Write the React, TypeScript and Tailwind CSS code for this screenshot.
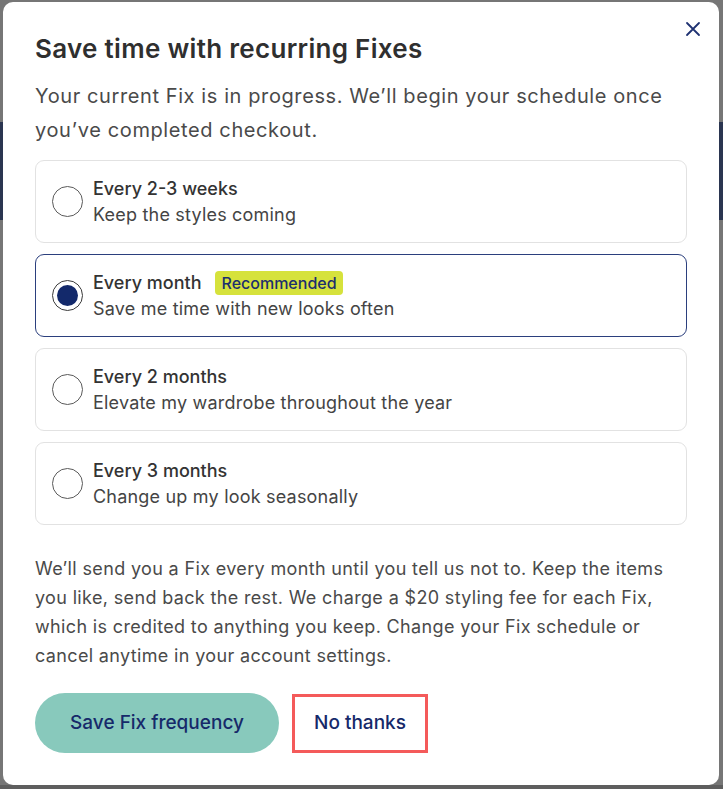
import { useState } from "react";

const options = [
  { id: "1", title: "Every 2-3 weeks", sub: "Keep the styles coming" },
  { id: "2", title: "Every month", sub: "Save me time with new looks often", badge: "Recommended" },
  { id: "3", title: "Every 2 months", sub: "Elevate my wardrobe throughout the year" },
  { id: "4", title: "Every 3 months", sub: "Change up my look seasonally" },
];

function App() {
  const [selected, setSelected] = useState("2");

  return (
    <main
      className="relative w-[723px] h-[789px] overflow-hidden bg-[#767676] pt-[2px] pl-[3px] pr-[4px]"
      style={{ fontFamily: "Inter, 'Noto Sans', sans-serif" }}
    >
      {/* dimmed page behind the modal */}
      <div className="absolute left-0 right-0 top-[122px] h-[98px] bg-[#2a3550]" />
      <div className="absolute left-0 right-0 bottom-0 h-[4px] bg-[#5e5e5e]" />

      <div className="modal relative w-[716px] h-[783px] bg-white rounded-[10px] px-[32px] pt-[30px]">
        <button className="absolute right-[17px] top-[18px] w-[18px] h-[18px] flex items-center justify-center text-[#1f3272]">
          <svg width="16" height="16" viewBox="0 0 16 16" fill="none" stroke="currentColor" strokeWidth="1.8" strokeLinecap="round">
            <path d="M2 2L14 14M14 2L2 14" />
          </svg>
        </button>

        <h1 className="text-[26px] leading-[34px] font-semibold text-[#2f2f2f] tracking-[0.3px]">
          Save time with recurring Fixes
        </h1>
        <p className="mt-[13px] w-[630px] text-[20px] leading-[34px] text-[#4a4a4a] tracking-[0.6px]">
          Your current Fix is in progress. We’ll begin your schedule once you’ve completed checkout.
        </p>

        <div className="options flex flex-col gap-[11px] mt-[13px]">
          {options.map((o) => {
            const active = o.id === selected;
            return (
              <div
                key={o.id}
                onClick={() => setSelected(o.id)}
                className={`card flex items-center h-[83px] w-[652px] rounded-[9px] border cursor-pointer pl-[16px] ${
                  active ? "border-[#2b3f7d] border-[1.5px]" : "border-[#e2e2e2]"
                }`}
              >
                <div
                  className={`w-[31px] h-[31px] rounded-full border-[1.5px] flex items-center justify-center shrink-0 ${
                    active ? "border-[#3a3a3a]" : "border-[#5a5a5a]"
                  }`}
                >
                  {active && <div className="w-[21px] h-[21px] rounded-full bg-[#13296b]" />}
                </div>
                <div className="ml-[10px] flex flex-col">
                  <div className="flex items-center">
                    <span className="text-[18px] leading-[26px] font-medium text-[#333]">{o.title}</span>
                    {o.badge && (
                      <span className="ml-[14px] bg-[#d6e23c] text-[#1c2f6e] text-[16px] leading-[24px] font-medium px-[6px] rounded-[4px]">
                        {o.badge}
                      </span>
                    )}
                  </div>
                  <span className="text-[18px] leading-[26px] text-[#444] tracking-[0.2px]">{o.sub}</span>
                </div>
              </div>
            );
          })}
        </div>

        <p className="mt-[29px] w-[640px] text-[18px] leading-[29px] text-[#4a4a4a] tracking-[0.35px]">
          We’ll send you a Fix every month until you tell us not to. Keep the items you like, send back the rest. We charge a $20 styling fee for each Fix, which is credited to anything you keep. Change your Fix schedule or cancel anytime in your account settings.
        </p>

        <div className="buttons flex items-center mt-[23px] gap-[13px]">
          <button className="w-[244px] h-[60px] rounded-full bg-[#88c9bc] text-[#16296a] text-[19px] font-medium">
            Save Fix frequency
          </button>
          <button className="w-[136px] h-[59px] border-[3px] border-[#f45a5a] text-[#16296a] text-[19px] font-medium">
            No thanks
          </button>
        </div>
      </div>
    </main>
  );
}

export default App;
